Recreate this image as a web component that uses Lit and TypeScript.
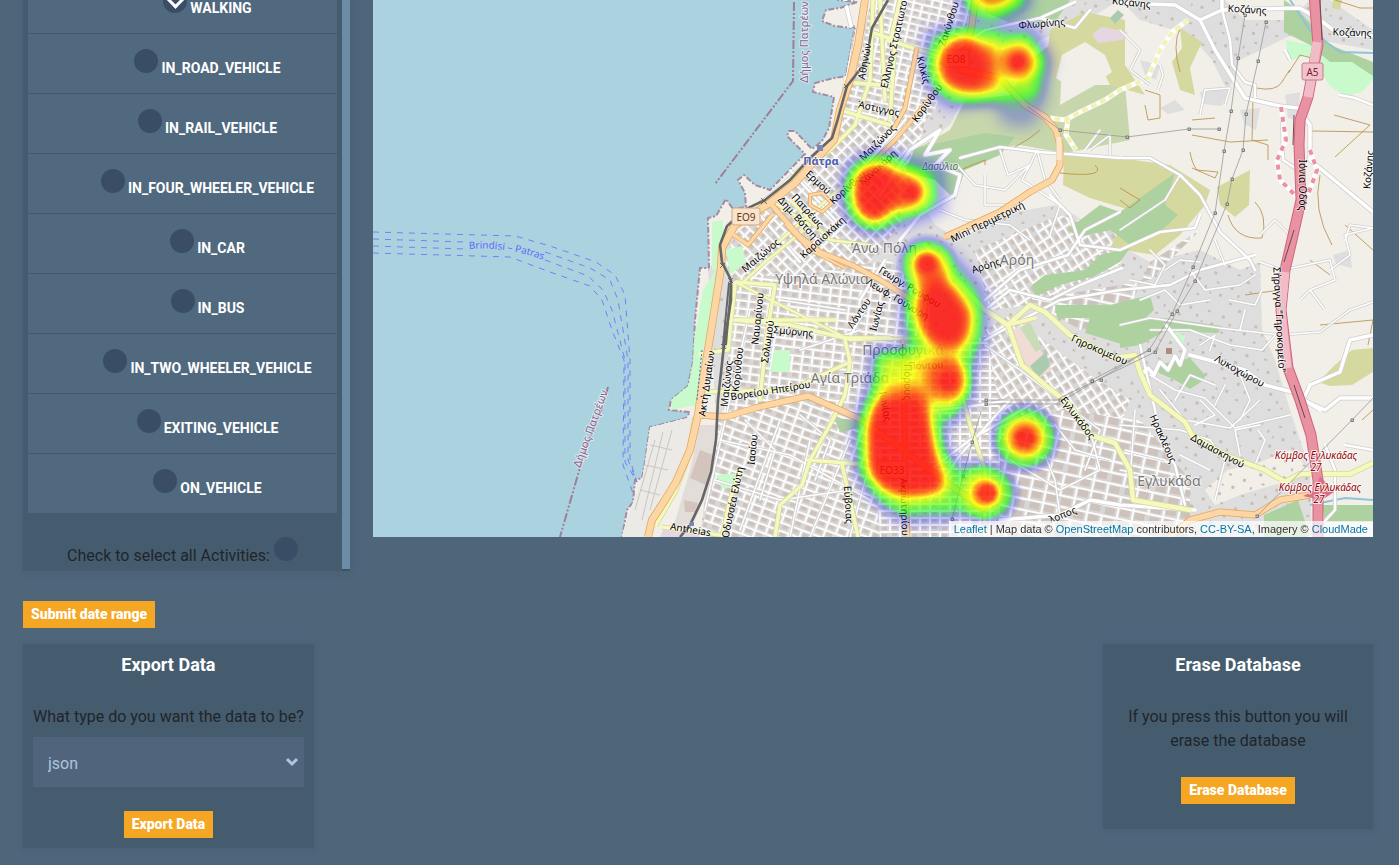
import { LitElement, html, svg, css } from "lit";
import { customElement, state } from "lit/decorators.js";

type Label = [text: string, x: number, y: number, angle: number, kind: string];
type Road = [d: string, width: number];

const ACTIVITIES = [
  "WALKING",
  "IN_ROAD_VEHICLE",
  "IN_RAIL_VEHICLE",
  "IN_FOUR_WHEELER_VEHICLE",
  "IN_CAR",
  "IN_BUS",
  "IN_TWO_WHEELER_VEHICLE",
  "EXITING_VEHICLE",
  "ON_VEHICLE",
];

// Label anchors are the middle of each text.
const LABELS: Label[] = [
  ["Δήμος Πατρέων", 808, 42, -90, "border"],
  ["Δήμος Πατρέων", 594, 430, -70, "border"],
  ["Αθηνών", 868, 62, -80, "street"],
  ["Ελληνος Στρατιωτού", 898, 42, -77, "street"],
  ["Ζακύνθου", 952, 25, -72, "street"],
  ["Άστιγγος", 878, 112, 12, "street"],
  ["Μαιζώνος", 880, 145, -45, "street"],
  ["Κορίνθου", 930, 105, -54, "street"],
  ["Κιλκίς", 920, 71, 75, "street"],
  ["Φλωρίνης", 1042, 27, -5, "street"],
  ["Κοζάνης", 1131, 6, 6, "street"],
  ["Κοζάνης", 1247, 13, 4, "street"],
  ["Κοζάνης", 1352, 36, 2, "street"],
  ["Κοζάνης", 1372, 170, -85, "street"],
  ["Πάτρα", 821, 165, 0, "station"],
  ["Ερμού", 816, 185, 42, "street"],
  ["Πατρέως", 805, 213, 48, "street"],
  ["Δημ. Βότση", 795, 220, 48, "street"],
  ["Κορίνθου", 850, 190, -42, "street"],
  ["Κανακάρη", 880, 170, -42, "street"],
  ["Καραϊσκάκη", 825, 240, -42, "street"],
  ["Μαιζώνος", 763, 258, -40, "street"],
  ["Άνω Πόλη", 884, 253, 0, "place"],
  ["Υψηλά Αλώνια", 822, 284, 0, "place"],
  ["Δασύλιο", 940, 170, 0, "wood"],
  ["Mini Περιμετρική", 989, 225, -26, "street"],
  ["Αρόη", 1017, 265, 0, "place"],
  ["Αρόης", 987, 269, -18, "street"],
  ["Γεωργ. Ρούφου", 908, 290, 31, "street"],
  ["Λεωφ. Γούναρη", 896, 302, 31, "street"],
  ["Ναυαρίνου", 761, 319, -84, "street"],
  ["Σολωμού", 771, 342, -82, "street"],
  ["Σμύρνης", 793, 335, 6, "street"],
  ["Λόντου", 862, 315, -56, "street"],
  ["Ιωνίας", 880, 317, -76, "street"],
  ["Προσφυγικά", 903, 355, 0, "place"],
  ["Πόντου", 926, 369, -2, "street"],
  ["Αγία Τριάδα", 850, 383, 0, "place"],
  ["Ακτή Δυμαίων", 710, 384, -82, "street"],
  ["Μαιζώνος", 730, 384, -84, "street"],
  ["Κορίνθου", 741, 370, -84, "street"],
  ["Βορείου Ηπείρου", 771, 394, -9, "street"],
  ["Πόρους", 904, 382, 90, "street"],
  ["Ιωνίας", 882, 407, 80, "street"],
  ["Ιασίου", 756, 450, -84, "street"],
  ["Οδυσσέα Ελύτη", 736, 503, -78, "street"],
  ["Antheias", 690, 533, 9, "street"],
  ["Εύβοιας", 845, 505, 87, "street"],
  ["Ακρωτηρίου", 901, 507, 88, "street"],
  ["Γηροκομείου", 1098, 353, 24, "street"],
  ["Εγλυκάδος", 1075, 420, 53, "street"],
  ["Λυκοχώρου", 1238, 374, 29, "street"],
  ["Ηρακλέους", 1160, 440, 66, "street"],
  ["Δαμασκηνού", 1216, 454, 29, "street"],
  ["Εγλυκάδα", 1169, 486, 0, "place"],
  ["λοπος", 1064, 518, -22, "street"],
  ["Ιόνια Οδός", 1299, 185, 90, "street"],
  ["Σήραγγα \"Γηροκομείο\"", 1276, 320, 87, "street"],
  ["Κόμβος Εγλυκάδας", 1316, 459, 0, "junction"],
  ["27", 1316, 471, 0, "junction"],
  ["Κόμβος Εγλυκάδας", 1320, 491, 0, "junction"],
  ["27", 1319, 503, 0, "junction"],
];

const SHIELDS: [string, number, number, number, string][] = [
  ["EO9", 732, 208, 28, "orange"],
  ["EO8", 943, 50, 26, "orange"],
  ["EO33", 877, 461, 30, "orange"],
  ["A5", 1302, 63, 21, "pink"],
];

const LAND =
  "M838 -5V0L857 2L840 8L826 10L822 21L835 26L850 28L855 26L846 76L830 79L815 83L813 92L834 97L829 128L822 141L812 149L795 131L789 131L787 136L805 154L770 190L755 185L744 175L738 180L745 193L746 207L733 209L726 199L716 216L708 218L709 268L700 268L695 320L693 362L688 386L671 400L669 410L690 412L686 418L659 425L650 427L648 440L645 462L642 478L635 480L633 502L627 510L621 542H1380V-5Z";

// [pattern id, polygon points]
const BLOCKS: [string, string][] = [
  ["blk-n", "872,0 975,0 950,60 935,110 900,150 868,150 830,150 845,100 860,60"],
  ["blk-c", "845,118 925,120 915,165 900,225 870,262 800,285 735,285 725,260 735,235 775,200 825,158"],
  ["blk-s", "728,278 800,275 890,260 930,300 930,390 870,430 808,398 722,415 730,340"],
  ["blk-w", "716,418 808,400 870,425 880,537 700,537 714,480"],
  ["blk-e", "872,380 1000,330 1010,400 990,537 880,537"],
  ["blk-d", "975,250 1060,215 1130,235 1120,265 1030,305 990,310"],
  ["blk-d", "985,330 1010,315 1090,375 1130,400 1110,450 1000,410"],
  ["blk-r", "1000,440 1060,410 1140,420 1190,480 1190,537 1000,537"],
  ["blk-r", "1150,280 1200,230 1150,262 1120,330 1080,330 1030,300"],
];

const AREAS: [string, string][] = [
  ["#dfdede", "M872 0H1120L1090 18L1040 40L1000 90L960 105L950 125L915 150L905 175L935 225L960 240L1000 215L1055 205L1075 215L1110 240L1150 262L1200 250L1240 270L1260 262L1262 330L1275 360L1290 410L1310 470L1312 537H700L716 418L708 270L735 235L825 158Z"],
  ["#dfdede", "M1120 0H1225L1245 20L1290 20L1310 0H1330L1373 30V50L1330 42L1290 36L1240 60L1228 92L1212 60L1190 35L1140 20Z"],
  ["#f2efe9", "M1228 470L1260 462L1290 450L1310 470L1290 480L1240 495L1215 505L1205 490Z"],
  ["#f2efe9", "M940 205L975 165L1040 150L1060 190L1000 212L962 225L945 220Z"],
  ["#c8d7ab", "M965 100L1010 95L1030 60L1050 45L1062 62L1060 105L1095 85L1125 85L1130 140L1065 153L1020 145L975 150L915 150L950 130Z"],
  ["#aed1a0", "M915 148L985 133L1015 137L1000 155L965 170L955 200L935 180L905 172Z"],
  ["#aed1a0", "M985 0H1070L1055 22L1015 25L985 12Z"],
  ["#d6d99f", "M1050 30L1085 12L1125 20L1125 65L1145 95L1110 85L1090 45L1065 60L1053 80L1048 50Z"],
  ["#f2efe9", "M1062 55L1085 42L1105 55L1112 72L1095 84L1070 88L1056 78Z"],
  ["#d6d99f", "M1180 28L1202 42L1190 68L1195 95L1180 90L1172 62L1182 48Z"],
  ["#d6d99f", "M1064 155L1120 158L1170 165L1210 190L1205 205L1180 235L1155 255L1110 248L1130 210L1090 198L1063 185Z"],
  ["#d6d99f", "M1217 187L1250 170L1249 205L1235 217L1220 205Z"],
  ["#aed1a0", "M1067 230L1100 205L1120 212L1175 173L1165 205L1178 215L1160 232L1130 245L1110 230L1080 237Z"],
  ["#aed1a0", "M1032 285L1045 275L1085 270L1100 255L1130 248L1120 262L1095 276L1060 285L1035 297Z"],
  ["#aed1a0", "M1055 305L1110 305L1150 295L1154 310L1130 332L1125 345L1085 333L1090 318L1057 318Z"],
  ["#aed1a0", "M1120 320L1165 318L1222 326L1218 333L1165 331L1140 345L1120 348Z"],
  ["#aed1a0", "M1157 365L1190 358L1205 375L1204 380L1190 389L1175 380L1157 372Z"],
  ["#c8facc", "M1167 328L1185 336L1183 345L1172 340Z"],
  ["#aed1a0", "M1284 0L1298 10L1330 45L1373 62V80L1340 72L1322 62L1310 45L1284 32Z"],
  ["#c8facc", "M1286 40L1310 45L1330 62L1352 62L1373 76V80L1362 92L1345 96L1330 86L1320 70L1305 55L1288 62Z"],
  ["#d6d99f", "M1333 0H1342L1340 10L1332 8Z"],
  ["#d6d99f", "M1318 382L1335 365L1352 350L1373 348V372L1352 385L1330 386Z"],
  ["#aed1a0", "M1264 515L1298 500L1310 537H1264Z"],
  ["#aed1a0", "M1322 505H1373V522H1325Z"],
  ["#c8facc", "M712 222L722 220L728 245L722 268L712 270Z"],
  ["#c8facc", "M703 290L716 270L712 320L703 350L697 405L671 410L672 398L689 384L694 340Z"],
  ["#c8facc", "M726 250L742 246L746 262L730 275Z"],
  ["#c8facc", "M774 350L790 350L790 372L770 372Z"],
  ["#aed1a0", "M834 418L858 420L860 428L840 432Z"],
  ["#c8facc", "M716 475L740 473L738 487L722 489Z"],
  ["#eceae6", "M650 427L694 416L680 470L655 520L648 537H621L633 502L642 478Z"],
  ["#e2ddd8", "M700 425L716 425L712 480L695 520L672 532L690 470Z"],
  ["#d3c4bd", "M700 450L713 455L706 485L690 478Z"],
  ["#d3c4bd", "M684 500L698 503L695 512L685 512Z"],
  ["#f1dcd5", "M1012 330L1024 325L1052 370L1035 380L1012 340Z"],
  ["#aacbaf", "M1030 366L1046 352L1050 366L1038 378Z"],
  ["#c8dcb8", "M1020 328L1030 322L1042 348L1036 352Z"],
  ["#e6d6e2", "M1092 34L1102 27L1128 32L1122 40L1098 43Z"],
  ["#aacbaf", "M1110 18L1118 10L1124 15L1115 24Z"],
  ["#e6d6e2", "M663 530L690 526L700 537H660Z"],
  ["#dfdede", "M1140 60L1160 65L1156 80L1145 75ZM1200 92L1230 88L1222 106L1203 104ZM1285 95L1300 92L1298 120L1288 118Z"],
  ["#dfdede", "M1160 108L1175 100L1185 110L1168 114ZM1240 110L1260 108L1256 130L1244 124ZM1333 255L1350 250L1352 268L1336 264Z"],
];

const WHITE: Road[] = [
  ["M1120 3L1175 5L1200 20L1215 50L1245 98L1280 106L1298 108L1310 125V160L1373 212", 4],
  ["M1200 20L1222 10L1222 0M1222 10L1300 8L1320 20L1340 35L1373 36", 4],
  ["M1122 158L1150 158L1180 175L1200 195L1220 232L1250 260L1255 270", 3],
  ["M960 158L1000 147L1040 152L1080 155L1120 158", 3],
  ["M1222 10L1230 40L1232 65L1245 82L1255 85V97", 3],
  ["M940 60L985 30L1040 18L1075 2M1040 18L1075 28L1090 10", 3],
  ["M880 195L910 150L940 130L925 155L950 150L935 165L960 175L955 195L920 215L900 240", 4],
  ["M957 165L975 185L1005 190L1030 165L1022 180L1060 205L1050 235", 2],
  ["M985 175L985 205L1010 205M1000 150L1008 175L1030 165L1037 150L1045 180L1060 200", 2],
  ["M1120 212L1085 230L1068 255L1020 270L985 300", 3],
  ["M1122 268L1080 285L1050 300L1010 290L985 310", 3],
  ["M1050 195L1070 215L1080 245L1120 250L1160 232L1195 228L1200 215", 3],
  ["M1180 175L1165 200L1120 230M1090 150L1110 135L1110 155M1100 130L1085 150", 2],
  ["M985 340L1012 325L1060 300L1120 290L1170 285L1200 270L1255 255", 3],
  ["M1120 325L1150 318L1220 328L1280 335L1320 332L1350 310L1373 302", 2],
  ["M1166 325L1185 350L1180 365L1175 356L1168 370L1160 362L1154 375L1148 368L1142 374", 4],
  ["M1190 355L1220 363L1245 370L1265 385L1292 392L1320 410M1310 385L1340 372L1350 340L1373 335", 4],
  ["M1150 330L1190 330L1230 345L1262 350L1280 330", 2],
  ["M1310 385L1303 400L1325 410L1340 398L1373 398", 4],
  ["M1150 375L1175 390L1205 398L1235 428L1290 415", 2],
  ["M1160 390L1185 420L1230 428L1260 400M1240 375L1250 400L1240 420", 2],
  ["M1310 537L1335 510V470L1325 445M1345 445L1373 450", 3],
  ["M1140 345L1155 410L1160 440L1175 465L1185 505", 3],
  ["M1120 425L1180 430L1210 440M1125 450L1165 460M1120 470L1170 480M1135 410L1130 480", 2],
  ["M1210 440L1225 460L1215 500M1180 455L1210 470", 2],
  ["M1240 455L1235 430L1260 425M1255 465L1265 440L1258 430M1200 400L1215 415L1195 425M1175 400L1190 375L1215 385M1225 385L1215 405", 2],
  ["M1140 300L1165 290L1180 305L1210 300M1190 270L1205 290L1240 285L1255 275M1215 240L1225 265M1165 270L1180 260L1200 262M1200 345L1215 335L1210 350", 2],
  ["M1150 250L1165 265L1155 285L1130 280M1230 300L1255 305L1262 290M1240 330L1245 310", 2],
  ["M1000 520L1060 515L1090 500L1120 505L1195 510", 4],
  ["M1055 425L1075 450L1110 460M1045 455L1055 480L1060 515M1010 460L1060 490L1100 470L1090 430", 2],
  ["M995 430L1060 400L1100 430L1085 470M1060 400L1020 370L985 345", 2],
  ["M900 415L980 405L1010 400L960 455L930 500M930 470L970 440L1030 405", 3],
  ["M1030 240L1010 225L965 220L940 210M1260 235L1275 220L1290 235M1345 240L1350 225L1373 228L1345 235L1350 255L1330 270", 2],
  ["M845 0L852 30L842 110L832 140L772 195L728 225", 4],
  ["M1150 85L1130 70L1140 50L1120 30M1160 65L1163 75L1158 90M1200 115L1205 90L1230 88L1225 105", 2],
  ["M1290 60L1285 50M1282 110L1283 160L1298 170L1300 200M1340 95L1355 98L1373 105", 3],
  ["M1260 262L1282 270L1330 260L1335 280L1310 290L1300 300M1310 290L1325 310", 2],
  ["M750 310L705 510M780 420L740 530M810 440L790 537M850 440L810 537M868 470L850 537", 2],
  ["M720 440L790 455L870 500M715 480L780 500L850 490M745 420L775 450L760 500M800 415L830 440L815 480M780 300L845 310M800 350L860 330", 2],
  ["M860 300L885 260M848 340L870 300M905 120L870 160M790 170L840 225M760 215L800 262", 3],
];

const YELLOW: Road[] = [
  ["M873 0L870 80L855 125L830 150L800 170L775 197", 4],
  ["M870 32L895 40L890 120M845 82L890 86M840 110L890 125M880 0L885 100", 4],
  ["M900 0L890 42M888 40L945 58", 4],
  ["M835 320L735 320M736 282L775 285L766 340L760 400M735 285L728 350L700 354", 4],
  ["M735 282L850 340L920 338L930 280", 3],
  ["M735 320L790 325L845 338L890 338M845 340L850 362L790 390L700 392", 4],
  ["M740 285L765 262L810 225L770 200M790 200L830 240L870 245M775 245L850 180", 3],
  ["M850 362L845 395L830 425L810 460L802 485L780 505L775 537", 4],
  ["M808 460L860 464M842 464L850 500L858 537M740 470L730 500L722 537", 4],
  ["M696 418L690 450L675 490L655 525", 6],
  ["M662 527L720 535", 4],
  ["M925 245L985 310L1008 325L1030 305L1045 312L1070 335L1115 358L1135 355L1140 372L1150 395L1185 422L1192 435L1225 455L1265 470L1285 482L1300 474L1350 474L1373 463", 5],
  ["M1008 325L1022 365L1045 385L1070 405L1090 435L1115 443L1130 470L1133 500L1190 510", 5],
  ["M958 380L970 425L985 470L985 537M1008 325L1035 318", 4],
];

const ORANGE: Road[] = [
  ["M865 0L858 45L850 80L840 110L834 140L820 155L795 183L770 203L735 225L722 248L721 268L712 325L703 380L698 415L690 450L676 482L665 500L652 520L648 537", 7],
  ["M698 415L725 417L755 408L808 396L858 418L890 440L930 470L985 510", 6],
  ["M975 0L972 25L962 70L1000 78L1025 105L1045 117L1056 130L1060 145V165L1052 180L1030 192L1000 212L945 237", 6],
  ["M770 203L800 237L820 252L852 265L880 280L920 305", 5],
  ["M937 90L895 140L855 180M917 48L905 108L893 130M734 235L748 245L772 215", 4],
  ["M810 195L822 193L832 203L822 212L810 205ZM786 225L810 250L845 268", 3],
  ["M1170 537L1190 520L1220 512L1255 515L1280 500L1310 495", 6],
  ["M903 340L905 470L908 537", 4],
];

const TRACKS =
  "M1180 28Q1172 45 1180 72M1145 90L1160 95L1160 118L1148 120L1145 105M1192 120L1215 118M1190 152Q1192 164 1197 170L1218 172L1215 178L1192 168M1192 135L1230 142L1268 140M1256 88Q1276 92 1282 82T1290 70Q1284 80 1300 55L1320 60M1253 100L1252 140L1268 145L1268 160M1120 188L1140 200L1130 208L1120 200M1228 215Q1235 240 1262 238Q1268 215 1255 202M1320 175Q1312 210 1332 245M1334 115L1370 125L1335 157M1312 131L1373 132M1345 225L1373 250M1310 260L1330 275M1245 295L1280 290M1335 0L1360 8H1373M1320 325L1373 320L1368 345M1010 150L1030 138L1040 130M1060 173Q1108 178 1095 165M960 170L985 160L985 165M1362 420L1373 410";

const POWER =
  "M1245 15L1238 58L1231 111L1224 151L1215 213L1193 267L1172 314L1149 350L1060 402M1266 22L1258 61L1246 114L1243 150L1232 179L1227 204L1195 281L1177 311L1155 352L1060 398M1027 106L1060 130L1127 137L1189 129L1219 129M986 400L1060 400M986 404L1060 404M981 412L972 442L963 476L952 519M1092 380L1149 350M1373 398L1352 420L1257 516";

const POWER_NODES: [number, number][] = [
  [1245, 15], [1238, 58], [1231, 111], [1224, 151], [1215, 213], [1193, 267], [1172, 314],
  [1266, 22], [1258, 61], [1246, 114], [1243, 150], [1232, 179], [1227, 204], [1195, 281], [1177, 311],
  [1060, 130], [1127, 137], [1189, 129], [1219, 129], [986, 400], [986, 404], [1060, 400], [1092, 381],
  [1101, 380], [972, 442], [963, 476], [952, 519], [1352, 420], [1257, 516], [1149, 350], [1155, 352],
];

const RAIL =
  "M888 0L872 28L866 62L847 86L837 122L832 138L810 158L790 180L765 200L748 208L727 226L720 245L722 262L731 280V300L724 345L718 400L716 440L711 472L702 500L690 525L680 537";

const MOTORWAY =
  "M1314 -5L1318 45L1312 75L1308 97L1300 120L1299 145L1301 200L1292 240L1285 270L1281 310L1288 368L1300 400L1311 435L1318 480V542";

const LANE =
  "M1188 20L1172 32L1160 50L1148 78L1120 90L1105 100L1080 112L1065 120L1050 118M1068 118L1066 135L1076 150";

const RAMPS = "M1281 107L1286 140L1277 160L1280 180L1298 198M1310 150L1317 170L1308 195";

const TABLE_R = "0 0 0 0 0 0 0 0 0 0 0 0 .17 .33 .5 .67 .83 1 1 1 1";
const TABLE_G = "0 0 0 0 0 0 .17 .33 .5 .67 .83 1 1 1 1 1 1 1 .67 .33 .05";
const TABLE_B = "1 1 1 1 1 1 .83 .67 .5 .33 .17 0 0 0 0 0 0 0 0 0 .02";

const blockPattern = (id: string, w: number, h: number, angle: number) => svg`
  <pattern id=${id} width=${w * 3} height=${h * 3} patternUnits="userSpaceOnUse" patternTransform="rotate(${angle})">
    <rect width=${w * 3} height=${h * 3} fill="#fcfcfc"/>
    ${[0, 1, 2].map((row) => [0, 1, 2].map((col) => {
      const wide = (row * 2 + col) % 3 === 0 && col < 2;
      const x = col * w + 1;
      const y = row * h + 1;
      return svg`
        <rect x=${x} y=${y} width=${(wide ? 2 * w : w) - 2} height=${h - 2} fill="#d9d7d5"/>
        <rect x=${x + 1} y=${y + (col === 1 ? 1 : 0)} width=${w - 5} height=${h - 4} fill="#cdc3bc"/>`;
    }))}
  </pattern>`;

@customElement("heat-map")
export class HeatMap extends LitElement {
  static styles = css`
    :host { display: block; position: relative; height: 537px; overflow: hidden; background: #aad3df; }
    .map { display: block; width: 100%; height: 100%; }
    text { font-family: "Noto Sans", sans-serif; text-anchor: middle; paint-order: stroke; stroke-linejoin: round; }
    .street { font-size: 10px; fill: #000; stroke: rgba(255, 255, 255, 0.5); stroke-width: 2px; }
    .place { font-size: 14px; fill: #777; stroke: rgba(255, 255, 255, 0.6); stroke-width: 2px; }
    .border { font-size: 11px; fill: #8d618b; stroke: rgba(255, 255, 255, 0.6); stroke-width: 2px; }
    .station { font-size: 11px; font-weight: 700; fill: #4d5fb4; stroke: rgba(255, 255, 255, 0.7); stroke-width: 2px; }
    .wood { font-size: 10px; font-style: italic; fill: #5c7353; stroke: rgba(255, 255, 255, 0.6); stroke-width: 2px; }
    .junction { font-size: 10px; font-style: italic; fill: #960000; stroke: rgba(255, 255, 255, 0.8); stroke-width: 2px; }
    .ferry { font-size: 10px; fill: #6666ff; text-anchor: start; }
    .shield { font-size: 10px; fill: #5f3c12; }
    .shield.pink { fill: #7b1a3b; }
    .credits { position: absolute; right: 0; bottom: 0; padding: 0 5px; background: rgba(255, 255, 255, 0.7);
      font: 11px/16px "Liberation Sans", Arial, sans-serif; color: #333; white-space: nowrap; }
    .credits a { color: #0078a8; text-decoration: none; }
  `;

  private casedRoads(roads: Road[], edge: string, fill: string) {
    return svg`
      <g fill="none" stroke=${edge} stroke-linejoin="round">${roads.map(([d, w]) => svg`<path d=${d} stroke-width=${w + 1}/>`)}</g>
      <g fill="none" stroke=${fill} stroke-linejoin="round" stroke-linecap="round">${roads.map(([d, w]) => svg`<path d=${d} stroke-width=${w - 0.5}/>`)}</g>`;
  }

  private heat() {
    return svg`
      <g filter="url(#ramp)">
        <g filter="url(#soft)">
          <path d="M876 389L905 385L928 388L938 410L943 445L953 480L949 498L925 504L900 505L876 496L860 475L858 430L864 404Z"/>
          <path d="M925 270L942 268L962 287L978 312L974 340L960 355L936 355L919 340L909 312L914 288Z"/>
          <path d="M852 165L872 155L892 157L908 174L912 190L904 212L880 232L858 226L846 208L845 182Z"/>
          <path d="M940 40L962 29L982 36L998 56L996 82L982 98L958 99L937 86L930 62Z"/>
        </g>
        <g filter="url(#soft)">
          <path d="M874 350H962L972 395L950 425L935 410L872 396Z" opacity=".8"/>
          <path d="M908 250L948 250L984 290L984 345L968 385H918L903 330Z" opacity=".5"/>
          <path d="M982 36L1030 28L1050 60L1038 98L1005 98L975 98Z" opacity=".72"/>
          <path d="M968 -40H1022L1018 3L992 16L970 5Z" opacity=".85"/>
          <path d="M962 -40H1030L1028 8L992 22L962 14Z" opacity=".6"/>
          <path d="M872 495L952 495L958 518L900 522Z" opacity=".5"/>
          <path d="M985 90H1048L1034 126H1006Z" opacity=".3"/>
          <path d="M890 155L942 166L944 210L895 228Z" opacity=".5"/>
          <path d="M940 460L985 465V515H945Z" opacity=".45"/>
          <path d="M925 30L1000 24L1004 100L945 108L925 80Z" opacity=".4"/>
        </g>
        <circle cx="1025" cy="438" r="38" fill="url(#spot)"/>
        <circle cx="987" cy="493" r="36" fill="url(#spot-small)"/>
        <circle cx="948" cy="381" r="28" fill="url(#spot-small)"/>
        <circle cx="927" cy="264" r="32" fill="url(#spot-small)"/>
        <circle cx="911" cy="192" r="28" fill="url(#spot-small)"/>
        <circle cx="1018" cy="62" r="26" fill="url(#spot-small)"/>
      </g>`;
  }

  render() {
    return html`
      <svg class="map" viewBox="373 0 1000 537" preserveAspectRatio="xMidYMid slice" role="img" aria-label="Heat map of Patras">
        <defs>
          ${blockPattern("blk-n", 9, 7, 13)}
          ${blockPattern("blk-c", 9, 8, 45)}
          ${blockPattern("blk-s", 10, 8, 7)}
          ${blockPattern("blk-w", 11, 8, 20)}
          ${blockPattern("blk-e", 10, 7, 0)}
          ${blockPattern("blk-d", 10, 8, 57)}
          ${blockPattern("blk-r", 15, 11, 12)}
          <pattern id="houses" width="34" height="30" patternUnits="userSpaceOnUse" patternTransform="rotate(17)">
            <path d="M3 4h3v3h-3zM12 10h2v3h-2zM22 3h3v2h-3zM28 14h3v3h-3zM6 20h3v2h-3zM17 24h3v3h-3zM18 15h2v2h-2z" fill="#cbbdb4"/>
          </pattern>
          <clipPath id="land"><path d=${LAND}/></clipPath>
          <radialGradient id="spot">
            <stop offset="0"/><stop offset=".2" stop-opacity=".99"/><stop offset=".46" stop-opacity=".86"/>
            <stop offset=".7" stop-opacity=".55"/><stop offset=".86" stop-opacity=".25"/><stop offset="1" stop-opacity="0"/>
          </radialGradient>
          <radialGradient id="spot-small">
            <stop offset="0"/><stop offset=".2" stop-opacity=".98"/><stop offset=".35" stop-opacity=".85"/>
            <stop offset=".66" stop-opacity=".5"/><stop offset=".82" stop-opacity=".22"/><stop offset="1" stop-opacity="0"/>
          </radialGradient>
          <filter id="soft" x="-20%" y="-20%" width="140%" height="140%"><feGaussianBlur stdDeviation="8"/></filter>
          <filter id="ramp" filterUnits="userSpaceOnUse" x="373" y="-60" width="1000" height="640" color-interpolation-filters="sRGB">
            <feColorMatrix in="SourceGraphic" values="0 0 0 1 0  0 0 0 1 0  0 0 0 1 0  0 0 0 0 1" result="level"/>
            <feComponentTransfer in="level" result="tint">
              <feFuncR type="table" tableValues=${TABLE_R}/>
              <feFuncG type="table" tableValues=${TABLE_G}/>
              <feFuncB type="table" tableValues=${TABLE_B}/>
            </feComponentTransfer>
            <feComponentTransfer in="SourceAlpha" result="cover">
              <feFuncA type="table" tableValues="0 .1 .2 .3 .4 .5 .6 .7 .8 .84 .84"/>
            </feComponentTransfer>
            <feComposite in="tint" in2="cover" operator="in"/>
          </filter>
        </defs>

        <path d=${LAND} fill="#f2efe9" stroke="#a58aa3" stroke-width="2" stroke-dasharray="6 2 2 2"/>
        <g clip-path="url(#land)">
          ${AREAS.slice(0, 4).map(([fill, d]) => svg`<path d=${d} fill=${fill}/>`)}
          <path d=${AREAS[0][1]} fill="url(#houses)"/>
          <path d=${AREAS[1][1]} fill="url(#houses)"/>
          ${BLOCKS.map(([id, points]) => svg`<polygon points=${points} fill="url(#${id})"/>`)}
          ${AREAS.slice(4).map(([fill, d]) => svg`<path d=${d} fill=${fill}/>`)}
          <path d="M1290 0L1310 30L1340 52L1373 53M1310 505L1345 498L1373 500" fill="none" stroke="#8fc3d6" stroke-width="2"/>
          <path d="M655 440L635 510M663 432L642 520M672 430L650 510M650 445L672 450M645 465L668 470M640 490L660 495" fill="none" stroke="#c9c6c2"/>
          <path d=${TRACKS} fill="none" stroke="#b58c42" stroke-width="1" opacity=".8"/>
          <path d=${LANE} fill="none" stroke="#fff" stroke-width="5"/>
          <path d=${LANE} fill="none" stroke="#f1f2b4" stroke-width="4" stroke-dasharray="6 4"/>
          ${this.casedRoads(WHITE, "#cfcfcf", "#ffffff")}
          ${this.casedRoads(YELLOW, "#d5d89a", "#f5f9bd")}
          ${this.casedRoads(ORANGE, "#e3a75c", "#fcd6a4")}
          <path d="M1059 137V160" stroke="#fbe6cb" stroke-width="5"/>
          <path d=${RAMPS} fill="none" stroke="#fff" stroke-width="5"/>
          <path d=${RAMPS} fill="none" stroke="#e892a2" stroke-width="4" stroke-dasharray="5 5"/>
          <g fill="none" stroke-linejoin="round">
            <path d=${MOTORWAY} stroke="#cf6580" stroke-width="11"/>
            <path d=${MOTORWAY} stroke="#e892a2" stroke-width="9"/>
            <path d="M1317 42L1312 75L1308 97M1285 272L1281 310L1287 368" stroke="#f0bcc6" stroke-width="9"/>
            <path d="M1320 0L1322 40M1294 115L1293 145M1294 230L1284 262M1294 385L1305 418" stroke="#6b4b52"/>
          </g>
          <path d="M1303 496L1316 490L1320 476L1334 492L1322 500Z" fill="#dc6f87"/>
          <path d=${RAIL} fill="none" stroke="#666" stroke-width="2.6"/>
          <path d="M731 285L726 345M729 283L723 345" fill="none" stroke="#666" stroke-width="2"/>
          <path d=${POWER} fill="none" stroke="#999" stroke-width=".8"/>
          ${POWER_NODES.map(([x, y]) => svg`<rect x=${x - 1} y=${y - 1} width="2.4" height="2.4" fill="#ccc" stroke="#666" stroke-width=".8"/>`)}
          <path d="M702 350L697 400" stroke="#4a6fd0" stroke-dasharray="2 2"/>
          <rect x="1166" y="348" width="6" height="6" fill="#ab8d82"/>
        </g>
        <rect x="817" y="145" width="6" height="6" fill="#7a86b8"/>
        <rect x="690" y="522" width="4" height="4" fill="#7a86b8"/>
        <path d="M761 198l6 6m0-6l-6 6M844 84l4 4m0-4l-4 4M720 263l5 5m0-5l-5 5M728 278l5 5m0-5l-5 5M721 344l5 5m0-5l-5 5" stroke="#555" stroke-width=".8"/>

        <path d="M794 2L793 81L715 184M608 387L603 405L585 450L560 537" fill="none" stroke="#a07c99" stroke-width="2" stroke-dasharray="9 2 2 2 2 2"/>
        <g fill="none" stroke="#7480f5" stroke-dasharray="6 6">
          <path d="M373 232L515 236L550 246L596 262L615 275L625 295L630 360V460L637 482"/>
          <path d="M373 239L465 242M545 252L590 268L610 280L618 300L628 360V460L637 482"/>
          <path d="M373 246L465 249M545 260L588 276L603 290L612 310L625 360V462L637 482"/>
          <path d="M373 253L510 257L550 272L590 286L602 300L612 330L624 360L623 465L634 496"/>
        </g>
        <path id="ferry-line" d="M469 249Q510 246 548 262" fill="none"/>
        <text class="ferry"><textPath href="#ferry-line">Brindisi – Patras</textPath></text>

        ${SHIELDS.map(([name, x, y, w, tone]) => svg`
          <rect x=${x} y=${y} width=${w} height="17" rx="2" fill=${tone === "pink" ? "#f3c3cc" : "#f8e3cd"} stroke=${tone === "pink" ? "#c97b8c" : "#d3a878"}/>
          <text class="shield ${tone}" x=${x + w / 2} y=${y + 13}>${name}</text>`)}
        ${LABELS.map(([text, x, y, angle, kind]) => svg`<text class=${kind} transform="translate(${x} ${y}) rotate(${angle})">${text}</text>`)}
        ${this.heat()}
      </svg>
      <div class="credits"><a href="#leaflet">Leaflet</a> | Map data © <a href="#osm">OpenStreetMap</a> contributors, <a href="#license">CC-BY-SA</a>, Imagery © <a href="#cloudmade">CloudMade</a></div>
    `;
  }
}

@customElement("app-root")
export class AppRoot extends LitElement {
  static styles = css`
    :host { display: block; min-height: 100vh; background: #4e657a; color: #212529;
      font: 400 16px/24px Roboto, sans-serif; }
    * { box-sizing: border-box; }
    .page { padding: 0 26px 16px 23px; }
    .top { display: flex; align-items: flex-start; gap: 23px; }
    heat-map { flex: 1; min-width: 0; }
    .activities { flex: none; width: 327px; height: 571px; display: flex; overflow: hidden;
      background: #455c6f; box-shadow: 1px 1px 5px rgba(69, 92, 111, 0.6); }
    .list { flex: 1; display: flex; flex-direction: column; justify-content: flex-end; overflow: hidden; }
    .track { width: 8px; background: #3d5363; padding-bottom: 2px; }
    .thumb { height: 100%; background: #6c8ba6; }
    .rows { margin: 0 5px; padding: 0; list-style: none; background: #50697f; }
    .row { display: flex; justify-content: center; align-items: baseline; gap: 3px; padding: 15px 0 15px 50px;
      border-bottom: 1px solid #415a6c; color: #fff; font-weight: 700; font-size: 14px; line-height: 20px; }
    .row:last-child { border-bottom: 0; }
    .all { display: flex; flex: none; justify-content: center; align-items: baseline; gap: 4px; padding: 24px 0 3px; }
    .tick { appearance: none; flex: none; width: 24px; height: 24px; margin: 0; border-radius: 50%; background: #394e64; position: relative; }
    .tick:checked::after { content: ""; position: absolute; left: 6px; top: 4px; width: 10px; height: 10px;
      border: solid #fff; border-width: 0 3px 3px 0; transform: rotate(45deg); }
    .action { border: 0; padding: 3px 8px; background: #f5a623; color: #fff; font: 900 14px/21px Roboto, sans-serif; }
    .submit { margin: 30px 0 16px; display: block; }
    .cards { display: flex; justify-content: space-between; align-items: flex-start; }
    .card { display: flex; flex-direction: column; align-items: center; padding: 10px; text-align: center;
      background: #455c6f; box-shadow: 1px 1px 5px rgba(69, 92, 111, 0.6); }
    .card.erase { width: 270px; padding-bottom: 25px; }
    .title { margin: 0 0 29px; color: #fff; font-size: 18px; line-height: 22px; font-weight: 700; }
    .text { margin: 0 0 24px; }
    .picker { display: grid; align-self: stretch; align-items: center; margin: 8px 0 24px; }
    .picker select { grid-area: 1 / 1; appearance: none; height: 50px; width: 100%; border: 0; border-radius: 0; padding: 3px 15px 0;
      background: #50657c; color: #acc6de; font: 400 16px/24px Roboto, sans-serif; }
    .picker svg { grid-area: 1 / 1; justify-self: end; margin-right: 5px; pointer-events: none; }
  `;

  @state() private selected = new Set(["WALKING"]);

  private toggle(name: string) {
    const next = new Set(this.selected);
    next.has(name) ? next.delete(name) : next.add(name);
    this.selected = next;
  }

  private toggleAll(e: Event) {
    this.selected = new Set((e.target as HTMLInputElement).checked ? ACTIVITIES : []);
  }

  render() {
    return html`
      <main class="page">
        <div class="top">
          <section class="activities">
            <div class="list">
              <ul class="rows">
                ${ACTIVITIES.map((name) => html`
                  <li class="row">
                    <input class="tick" type="checkbox" id=${name} .checked=${this.selected.has(name)} @change=${() => this.toggle(name)} />
                    <label for=${name}>${name}</label>
                  </li>`)}
              </ul>
              <div class="all">
                <label for="all">Check to select all Activities:</label>
                <input class="tick" type="checkbox" id="all" @change=${this.toggleAll} />
              </div>
            </div>
            <div class="track"><div class="thumb"></div></div>
          </section>
          <heat-map></heat-map>
        </div>
        <button class="action submit">Submit date range</button>
        <div class="cards">
          <section class="card">
            <h2 class="title">Export Data</h2>
            <label for="format">What type do you want the data to be?</label>
            <div class="picker">
              <select id="format"><option>json</option><option>xml</option><option>csv</option></select>
              <svg width="14" height="10" viewBox="0 0 14 10"><path d="M2 2l5 5 5-5" fill="none" stroke="#acc6de" stroke-width="3"/></svg>
            </div>
            <button class="action">Export Data</button>
          </section>
          <section class="card erase">
            <h2 class="title">Erase Database</h2>
            <p class="text">If you press this button you will erase the database</p>
            <button class="action">Erase Database</button>
          </section>
        </div>
      </main>
    `;
  }
}
